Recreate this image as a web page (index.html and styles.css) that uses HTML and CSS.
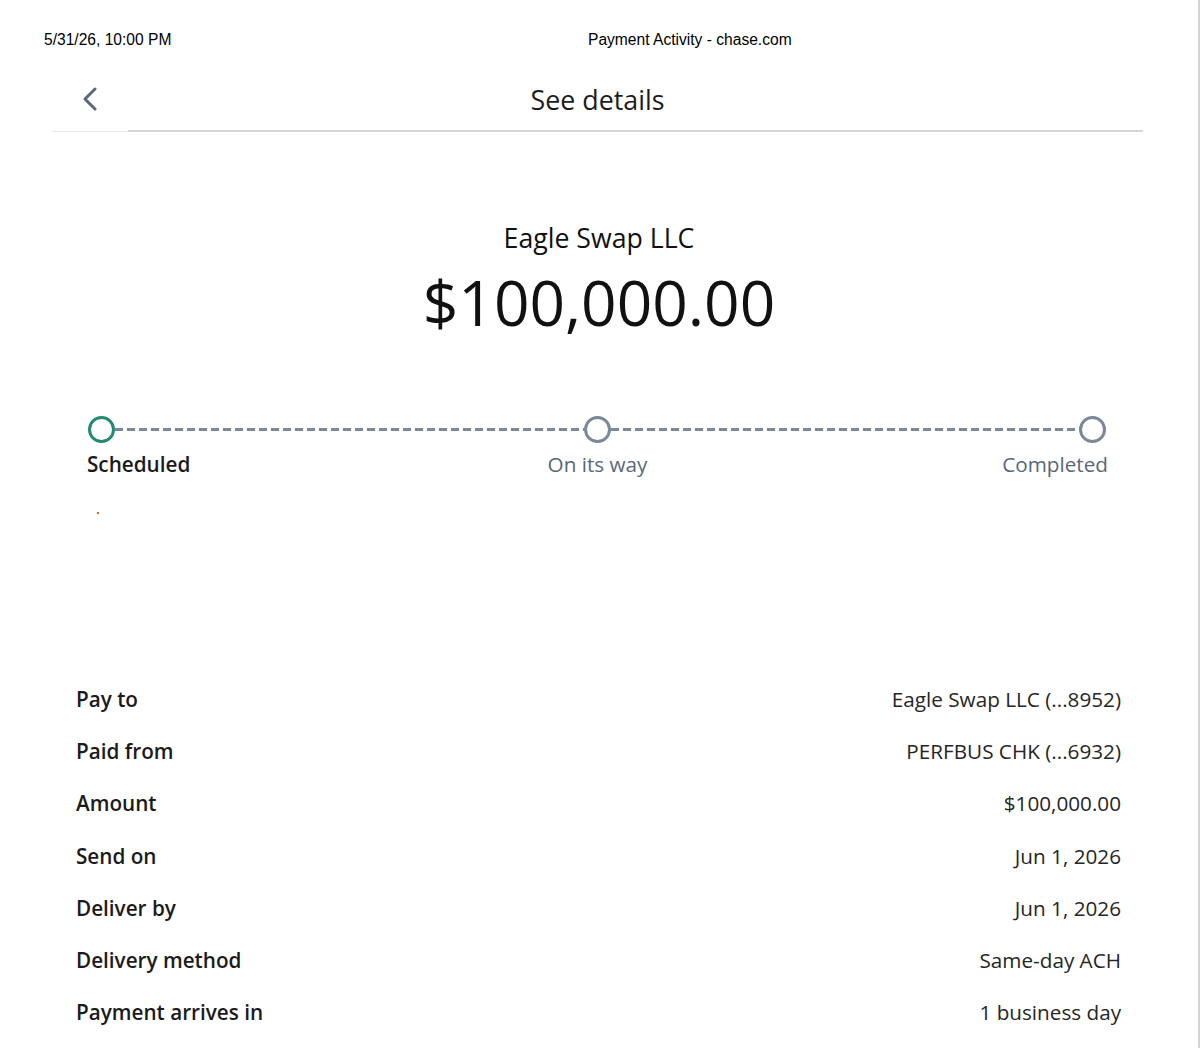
FILE: index.html
```html
<!DOCTYPE html>
<html lang="en">
<head>
    <meta charset="UTF-8">
    <meta name="viewport" content="width=device-width, initial-scale=1.0">
    <title>Payment Activity - chase.com</title>
    <link rel="stylesheet" href="styles.css">
</head>
<body>
    <div class="page">
        <!-- print header -->
        <div class="print-head">
            <span class="print-date">5/31/26, 10:00 PM</span>
            <span class="print-title">Payment Activity - chase.com</span>
        </div>

        <div class="topbar">
            <a class="back" href="#" aria-label="Back">
                <svg width="16" height="24" viewBox="0 0 16 24">
                    <path d="M13 2 L3 12 L13 22" fill="none" stroke="#5b6877" stroke-width="3" stroke-linecap="round" stroke-linejoin="round"/>
                </svg>
            </a>
            <h1 class="title">See details</h1>
            <div class="spacer"></div>
        </div>

        <div class="hero">
            <div class="payee">Eagle Swap LLC</div>
            <div class="amount">$100,000.00</div>
        </div>

        <div class="stepper">
            <div class="track">
                <span class="dot active"></span>
                <span class="dash"></span>
                <span class="dot"></span>
                <span class="dash"></span>
                <span class="dot"></span>
            </div>
            <div class="labels">
                <span class="step active">Scheduled</span>
                <span class="step mid">On its way</span>
                <span class="step end">Completed</span>
            </div>
            <span class="speck"></span>
        </div>

        <dl class="details">
            <div class="row"><dt>Pay to</dt><dd>Eagle Swap LLC (...8952)</dd></div>
            <div class="row"><dt>Paid from</dt><dd>PERFBUS CHK (...6932)</dd></div>
            <div class="row"><dt>Amount</dt><dd>$100,000.00</dd></div>
            <div class="row"><dt>Send on</dt><dd>Jun 1, 2026</dd></div>
            <div class="row"><dt>Deliver by</dt><dd>Jun 1, 2026</dd></div>
            <div class="row"><dt>Delivery method</dt><dd>Same-day ACH</dd></div>
            <div class="row"><dt>Payment arrives in</dt><dd>1 business day</dd></div>
        </dl>
    </div>
</body>
</html>
```

FILE: styles.css
```css
* {
    margin: 0;
    padding: 0;
    box-sizing: border-box;
}

body {
    font-family: 'Open Sans', 'Noto Sans', sans-serif;
    background: white;
    color: #1b1b1b;
    overflow: hidden;
}

.page {
    width: 1200px;
    min-height: 1048px;
    border-right: 2px solid #d3d3d3;
}

.print-head {
    display: flex;
    padding: 31px 0 0 44px;
    font-family: 'Liberation Sans', Arial, sans-serif;
    font-size: 15.6px;
    line-height: 18px;
    color: #000;
}

.print-date {
    width: 544px;
}

.topbar {
    display: grid;
    grid-template-columns: 76px 1fr 76px;
    margin: 21px 55px 0 52px;
    height: 62px;
}

.back {
    display: flex;
    align-items: center;
    justify-content: center;
    padding-bottom: 4px;
    border-bottom: 1px solid #e6e8eb;
}

.title {
    font-size: 26.8px;
    font-weight: 400;
    line-height: 36px;
    text-align: center;
    color: #1c1c1c;
    padding-top: 12px;
    border-bottom: 2px solid #d3d7dc;
}

.spacer {
    border-bottom: 2px solid #d3d7dc;
}

.hero {
    text-align: center;
    margin-top: 88px;
    color: #111;
}

.payee {
    font-size: 26.7px;
    line-height: 36px;
}

.amount {
    font-size: 62.2px;
    line-height: 74px;
    margin-top: 9px;
}

.stepper {
    margin: 77px 90px 0 87px;
}

.track {
    display: flex;
    align-items: center;
    padding: 0 2px 0 1px;
}

.dot {
    width: 27px;
    height: 27px;
    border: 3px solid #7a8899;
    border-radius: 50%;
    background: white;
    flex-shrink: 0;
}

.dot.active {
    border-color: #228a71;
}

.dash {
    flex: 1;
    height: 3px;
    background: repeating-linear-gradient(90deg, #7a8899 0 8px, transparent 8px 12px);
}

.labels {
    display: grid;
    grid-template-columns: 1fr 1fr 1fr;
    margin-top: 7px;
    font-size: 20.7px;
    line-height: 28px;
    color: #5a6777;
}

.step.active {
    color: #1a1a1a;
    font-weight: 600;
}

.step.mid {
    text-align: center;
}

.step.end {
    text-align: right;
}

.speck {
    display: block;
    width: 2px;
    height: 2px;
    margin: 34px 0 0 10px;
    background: #d2691e;
}

.details {
    margin: 159px 77px 0 76px;
    font-size: 20.7px;
    line-height: 28px;
}

.row {
    display: flex;
    justify-content: space-between;
    padding: 12px 0 12.2px;
}

.row dt {
    font-weight: 600;
    color: #1b1b1b;
}

.row dd {
    color: #262626;
}
```
